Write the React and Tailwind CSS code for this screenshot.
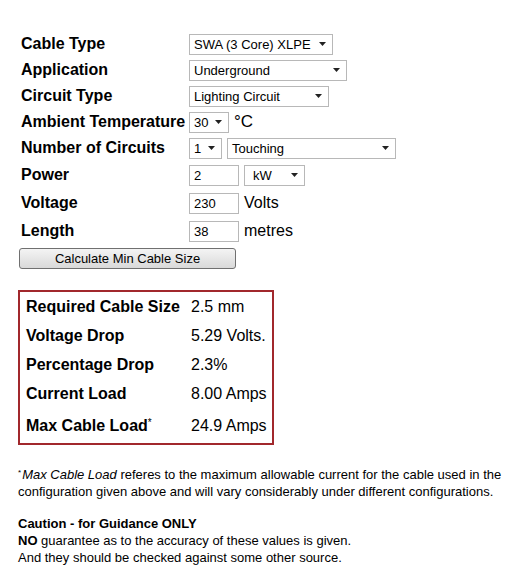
const Arrow = () => (
  <svg className="absolute right-[6px] top-1/2 -translate-y-1/2" width="7" height="4" viewBox="0 0 7 4">
    <path d="M0 0h7L3.5 4z" fill="#222" />
  </svg>
);

const Select = ({ value, className }) => (
  <div className={"relative h-[21px] border border-[#b8b8b8] bg-white pl-[4px] text-[13px] leading-[19px] text-black " + className}>
    {value}
    <Arrow />
  </div>
);

const Input = ({ value }) => (
  <div className="h-[21px] w-[50px] border border-[#b8b8b8] bg-white pl-[4px] text-[13px] leading-[19px] text-black">
    {value}
  </div>
);

const Row = ({ label, h, children }) => (
  <div className={"flex items-center " + h}>
    <div className="w-[171px] pl-[3px] text-[16px] font-bold text-black">{label}</div>
    <div className="flex items-center gap-[5px]">{children}</div>
  </div>
);

const Result = ({ label, value, sup, h }) => (
  <div className={"flex items-center " + h}>
    <div className="w-[165px] text-[16px] font-bold text-black">
      {label}
      {sup && <sup className="text-[10px] font-normal">*</sup>}
    </div>
    <div className="text-[16px] text-black">{value}</div>
  </div>
);

export default function App() {
  return (
    <div className="min-h-[584px] w-[507px] bg-white pl-[18px] pt-[31px] font-['Liberation_Sans',Arial,sans-serif] text-black">
      <Row label="Cable Type" h="h-[26px]">
        <Select value="SWA (3 Core) XLPE" className="w-[144px]" />
      </Row>
      <Row label="Application" h="h-[26px]">
        <Select value="Underground" className="w-[158px]" />
      </Row>
      <Row label="Circuit Type" h="h-[26px]">
        <Select value="Lighting Circuit" className="w-[140px]" />
      </Row>
      <Row label="Ambient Temperature" h="h-[26px]">
        <Select value="30" className="w-[40px]" />
        <span className="text-[17px]">°C</span>
      </Row>
      <Row label="Number of Circuits" h="h-[26px]">
        <Select value="1" className="w-[33px]" />
        <Select value="Touching" className="w-[169px]" />
      </Row>
      <Row label="Power" h="h-[28px]">
        <Input value="2" />
        <Select value="kW" className="w-[61px] pl-[8px]" />
      </Row>
      <Row label="Voltage" h="h-[28px]">
        <Input value="230" />
        <span className="text-[16px]">Volts</span>
      </Row>
      <Row label="Length" h="h-[28px]">
        <Input value="38" />
        <span className="text-[16px]">metres</span>
      </Row>
      <button className="ml-[1px] mt-[3px] h-[21px] w-[217px] rounded-[3px] border border-[#707070] bg-gradient-to-b from-[#f4f4f4] to-[#d9d9d9] text-[13px] leading-[19px] text-black">
        Calculate Min Cable Size
      </button>

      <div className="mt-[20px] w-[256px] border-2 border-[#a1282c] pl-[6px]">
        <Result label="Required Cable Size" value="2.5 mm" h="h-[29px]" />
        <Result label="Voltage Drop" value="5.29 Volts." h="h-[29px]" />
        <Result label="Percentage Drop" value="2.3%" h="h-[29px]" />
        <Result label="Current Load" value="8.00 Amps" h="h-[29px]" />
        <Result label="Max Cable Load" value="24.9 Amps" sup h="h-[35px]" />
      </div>

      <p className="mt-[21px] text-[13px] leading-[17px]">
        <span className="relative -top-[4px] pr-[1px] text-[8px] leading-none">*</span>
        <i>Max Cable Load</i> referes to the maximum allowable current for the cable used in the configuration given above and will vary considerably under different configurations.
      </p>

      <p className="mt-[15px] text-[13px] leading-[17px]">
        <b>Caution - for Guidance ONLY</b>
        <br />
        <b>NO</b> guarantee as to the accuracy of these values is given.
        <br />
        And they should be checked against some other source.
      </p>
    </div>
  );
}
